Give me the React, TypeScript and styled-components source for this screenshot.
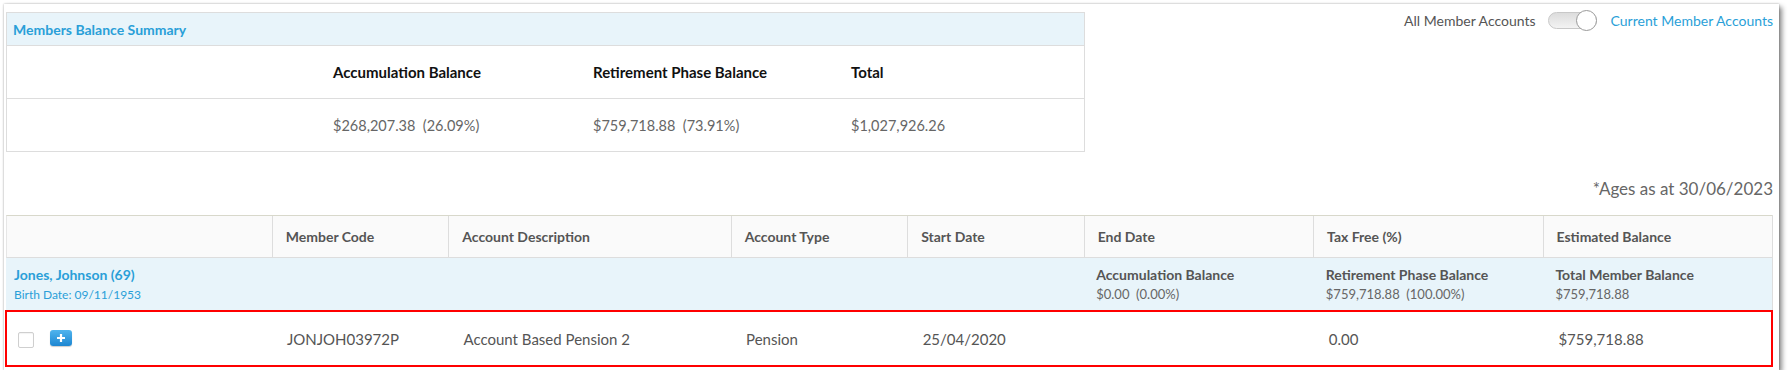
import React from "react";
import styled, { createGlobalStyle } from "styled-components";

const GlobalStyle = createGlobalStyle`
  html, body {
    margin: 0;
    padding: 0;
    background: #fff;
  }
  body {
    font-family: Lato, "Open Sans", Arial, sans-serif;
    color: #555;
  }
`;

const COLS = "15% 10% 16% 10% 10% 13% 13% 13%";

const Frame = styled.div`
  margin: 4px 0 0 4px;
  width: 1775px;
  height: 366px;
  box-sizing: border-box;
  padding: 6px 6px 0 2px;
  background: #fff;
  box-shadow: 0 0 2px rgba(0, 0, 0, 0.3), 3px 3px 5px rgba(0, 0, 0, 0.45);
`;

const TopBar = styled.div`
  display: flex;
  justify-content: space-between;
  align-items: flex-start;
`;

const SummaryBox = styled.div`
  width: 1077px;
  margin-top: 2px;
  border: 1px solid #ddd;
`;

const SummaryTitle = styled.div`
  height: 32px;
  display: flex;
  align-items: center;
  padding-left: 6px;
  background: #e8f4fa;
  border-bottom: 1px solid #ddd;
  color: #2a9fd8;
  font-size: 14px;
  font-weight: 700;
`;

const SummaryRow = styled.div<{ $last?: boolean }>`
  display: grid;
  grid-template-columns: 314px 260px 258px 1fr;
  height: 52px;
  border-bottom: ${(p) => (p.$last ? "none" : "1px solid #ddd")};
`;

const SummaryCell = styled.div<{ $head?: boolean }>`
  display: flex;
  align-items: center;
  padding-left: 12px;
  font-size: ${(p) => (p.$head ? "15px" : "14.5px")};
  font-weight: ${(p) => (p.$head ? 700 : 400)};
  color: ${(p) => (p.$head ? "#111" : "#666")};
  white-space: pre;
`;

const ToggleGroup = styled.div`
  display: flex;
  align-items: center;
  height: 20px;
  font-size: 14px;
`;

const ToggleLabel = styled.span<{ $active?: boolean }>`
  color: ${(p) => (p.$active ? "#2a9fd8" : "#555")};
`;

const Switch = styled.span`
  position: relative;
  display: inline-block;
  width: 47px;
  height: 15px;
  margin: 0 14px 0 12px;
  border: 1px solid #c8c8c8;
  border-radius: 9px;
  background: linear-gradient(#dcdcdc, #f3f3f3);
`;

const Knob = styled.span`
  position: absolute;
  right: -1px;
  top: -3px;
  width: 19px;
  height: 19px;
  border: 1px solid #9a9a9a;
  border-radius: 50%;
  background: #fff;
`;

const AgesNote = styled.div`
  margin-top: 27px;
  line-height: 20px;
  text-align: right;
  font-size: 17px;
  color: #666;
`;

const Table = styled.div`
  margin-top: 16px;
  border-right: 1px solid #ddd;
`;

const HeadRow = styled.div`
  display: grid;
  grid-template-columns: ${COLS};
  height: 41px;
  background: #fafafa;
  border-top: 1px solid #d8d8cb;
  border-bottom: 1px solid #ddd;
  border-left: 1px solid #e6e6e6;
`;

const HeadCell = styled.div`
  display: flex;
  align-items: center;
  padding-left: 13px;
  font-size: 14px;
  font-weight: 700;
  color: #555;
  & + & {
    border-left: 1px solid #ddd;
  }
`;

const GroupRow = styled.div`
  display: grid;
  grid-template-columns: ${COLS};
  height: 52px;
  background: #e8f4fa;
`;

const GroupCell = styled.div<{ $span?: number; $first?: boolean }>`
  grid-column: span ${(p) => p.$span ?? 1};
  display: flex;
  flex-direction: column;
  justify-content: center;
  gap: 3px;
  padding-left: ${(p) => (p.$first ? "8px" : "13px")};
  font-size: 13px;
  line-height: 17px;
  color: #666;
`;

const GroupTitle = styled.span<{ $blue?: boolean }>`
  font-size: 14px;
  font-weight: 700;
  color: ${(p) => (p.$blue ? "#2a9fd8" : "#555")};
`;

const GroupSub = styled.span<{ $blue?: boolean }>`
  font-size: ${(p) => (p.$blue ? "12px" : "13px")};
  color: ${(p) => (p.$blue ? "#2a9fd8" : "#666")};
  white-space: pre;
`;

const DataRow = styled.div`
  display: grid;
  grid-template-columns: ${COLS};
  height: 55px;
  margin-top: 1px;
  outline: 2px solid #ff0000;
  outline-offset: -1px;
`;

const DataCell = styled.div`
  display: flex;
  align-items: center;
  padding-left: 16px;
  font-size: 15px;
  color: #555;
`;

const ActionCell = styled.div`
  display: flex;
  align-items: center;
  gap: 16px;
  padding: 3px 0 0 12px;
`;

const CheckBox = styled.span`
  width: 14px;
  height: 14px;
  border: 1px solid #cfcfcf;
  border-radius: 2px;
  background: #fff;
  box-shadow: inset 0 1px 1px rgba(0, 0, 0, 0.05);
`;

const PlusButton = styled.span`
  display: flex;
  align-items: center;
  justify-content: center;
  width: 22px;
  height: 16px;
  margin-top: -4px;
  border-radius: 3px;
  background: linear-gradient(#4fb4ee, #1d86d1);
  box-shadow: 0 1px 1px rgba(0, 0, 0, 0.2);
`;

const PlusIcon = () => (
  <svg width="10" height="10" viewBox="0 0 10 10">
    <path d="M5 1v8M1 5h8" stroke="#fff" strokeWidth="2.2" />
  </svg>
);

const headers = [
  "",
  "Member Code",
  "Account Description",
  "Account Type",
  "Start Date",
  "End Date",
  "Tax Free (%)",
  "Estimated Balance",
];

const groupTotals = [
  { title: "Accumulation Balance", value: "$0.00  (0.00%)" },
  { title: "Retirement Phase Balance", value: "$759,718.88  (100.00%)" },
  { title: "Total Member Balance", value: "$759,718.88" },
];

const account = [
  "JONJOH03972P",
  "Account Based Pension 2",
  "Pension",
  "25/04/2020",
  "",
  "0.00",
  "$759,718.88",
];

export default function App() {
  return (
    <>
      <GlobalStyle />
      <Frame>
        <TopBar>
          <SummaryBox>
            <SummaryTitle>Members Balance Summary</SummaryTitle>
            <SummaryRow>
              <SummaryCell $head />
              <SummaryCell $head>Accumulation Balance</SummaryCell>
              <SummaryCell $head>Retirement Phase Balance</SummaryCell>
              <SummaryCell $head>Total</SummaryCell>
            </SummaryRow>
            <SummaryRow $last>
              <SummaryCell />
              <SummaryCell>$268,207.38  (26.09%)</SummaryCell>
              <SummaryCell>$759,718.88  (73.91%)</SummaryCell>
              <SummaryCell>$1,027,926.26</SummaryCell>
            </SummaryRow>
          </SummaryBox>
          <ToggleGroup>
            <ToggleLabel>All Member Accounts</ToggleLabel>
            <Switch>
              <Knob />
            </Switch>
            <ToggleLabel $active>Current Member Accounts</ToggleLabel>
          </ToggleGroup>
        </TopBar>

        <AgesNote>*Ages as at 30/06/2023</AgesNote>

        <Table>
          <HeadRow>
            {headers.map((h, i) => (
              <HeadCell key={i}>{h}</HeadCell>
            ))}
          </HeadRow>
          <GroupRow>
            <GroupCell $span={5} $first>
              <GroupTitle $blue>Jones, Johnson (69)</GroupTitle>
              <GroupSub $blue>Birth Date: 09/11/1953</GroupSub>
            </GroupCell>
            {groupTotals.map((g) => (
              <GroupCell key={g.title}>
                <GroupTitle>{g.title}</GroupTitle>
                <GroupSub>{g.value}</GroupSub>
              </GroupCell>
            ))}
          </GroupRow>
          <DataRow>
            <ActionCell>
              <CheckBox />
              <PlusButton>
                <PlusIcon />
              </PlusButton>
            </ActionCell>
            {account.map((v, i) => (
              <DataCell key={i}>{v}</DataCell>
            ))}
          </DataRow>
        </Table>
      </Frame>
    </>
  );
}
